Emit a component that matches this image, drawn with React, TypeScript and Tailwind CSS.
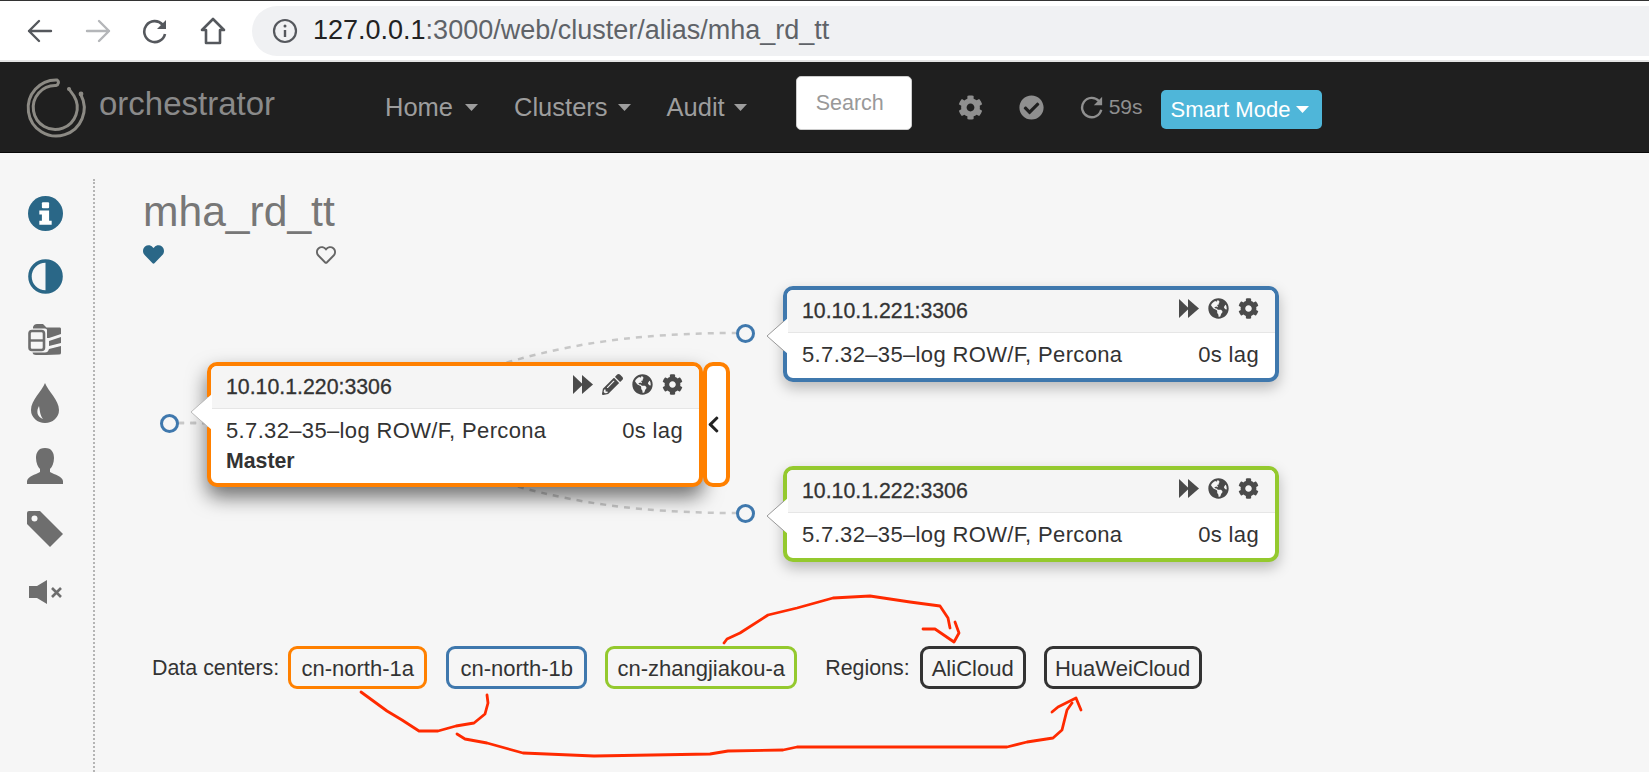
import React from 'react';
import { FaCog, FaCheckCircle, FaGlobeAmericas, FaPencilAlt, FaChevronLeft, FaHeart, FaRegHeart } from 'react-icons/fa';

const Caret = ({ className }: { className: string }) => (
  <svg width="13" height="7" viewBox="0 0 13 7" className={className}>
    <polygon points="0,0 13,0 6.5,7" fill="currentColor" />
  </svg>
);

const Logo = () => (
  <svg width="80" height="75" viewBox="0 0 80 75" fill="none" stroke="#8c8a84" strokeLinecap="round">
    <path d="M60 25 A28 28 0 1 1 36 10 A3 3 0 0 1 35 15.5 A22 22 0 1 0 53 26 L48 19" strokeWidth="3" />
    <circle cx="48" cy="19" r="2" fill="#8c8a84" stroke="none" />
    <circle cx="60" cy="24" r="2.4" fill="#8c8a84" stroke="none" />
  </svg>
);

const BackArrow = ({ className }: { className: string }) => (
  <svg width="26" height="26" viewBox="0 0 26 26" fill="none" stroke="currentColor" strokeWidth="2.4" strokeLinecap="round" strokeLinejoin="round" className={className}>
    <path d="M24 13 H2 M12 3 L2 13 L12 23" />
  </svg>
);

const ForwardArrow = ({ className }: { className: string }) => (
  <svg width="26" height="26" viewBox="0 0 26 26" fill="none" stroke="currentColor" strokeWidth="2.4" strokeLinecap="round" strokeLinejoin="round" className={className}>
    <path d="M2 13 H24 M14 3 L24 13 L14 23" />
  </svg>
);

const ReloadIcon = ({ size, className }: { size: number; className: string }) => (
  <svg width={size} height={size} viewBox="0 0 26 26" className={className}>
    <path d="M20.5 6.5 A10.5 10.5 0 1 0 23 16" fill="none" stroke="currentColor" strokeWidth="2.6" />
    <polygon points="24,2 24,11 15,11" fill="currentColor" />
  </svg>
);

const HomeIcon = () => (
  <svg width="26" height="28" viewBox="0 0 26 28" fill="none" stroke="#55585d" strokeWidth="2.6" strokeLinejoin="round">
    <path d="M13 2 L24 13 H20 V26 H6 V13 H2 Z" />
  </svg>
);

const InfoOutline = () => (
  <svg width="26" height="26" viewBox="0 0 26 26" fill="none" stroke="#55585d">
    <circle cx="13" cy="13" r="11" strokeWidth="2.2" />
    <path d="M13 12 V19" strokeWidth="2.4" />
    <circle cx="13" cy="8" r="1.5" fill="#55585d" stroke="none" />
  </svg>
);

const ForwardIcon = () => (
  <svg width="20" height="19" viewBox="0 0 20 19" fill="#4a4a4a">
    <polygon points="0,0 10,9.5 0,19" />
    <polygon points="9,0 20,9.5 9,19" />
  </svg>
);

const InfoIcon = () => (
  <svg width="35" height="35" viewBox="0 0 34 34">
    <circle cx="17" cy="17" r="17" fill="#2a6787" />
    <rect x="13.5" y="6" width="7" height="6" rx="1" fill="#fff" />
    <polygon points="11,14 20.5,14 20.5,24 23,24 23,28 11,28 11,24 13.5,24 13.5,18 11,18" fill="#fff" />
  </svg>
);

const AdjustIcon = () => (
  <svg width="35" height="35" viewBox="0 0 36 36">
    <circle cx="18" cy="18" r="16" fill="none" stroke="#2a6787" strokeWidth="3.6" />
    <path d="M18 1 A17 17 0 0 1 18 35 Z" fill="#2a6787" />
  </svg>
);

const BlocksIcon = () => (
  <svg width="36" height="36" viewBox="8 8 36 36" fill="#6e6e6e">
    <rect x="10.5" y="17" width="14.5" height="19" rx="2.5" fill="none" stroke="#6e6e6e" strokeWidth="2.6" />
    <path d="M10.5 26.5 H25" fill="none" stroke="#6e6e6e" strokeWidth="2.4" />
    <path d="M14 13 Q15 10 18 10 H24 L27.5 13.5 H41 Q42 13.5 42 15 V20 L30 24 H28 V16 Q28 14.5 26 14.5 H14 Z" />
    <path d="M30 27 L42 23 V29 L30 32 Z" />
    <path d="M30 35 L42 32 V39 Q42 40.5 40 40.5 L27 41 H17 Q14 41 13.5 38.5 H26 Q29 38.5 30 35 Z" />
  </svg>
);

const DropIcon = () => (
  <svg width="28" height="40" viewBox="0 0 28 40">
    <path d="M14 0 C17 8 28 17 28 27 A14 13 0 0 1 0 27 C0 17 11 8 14 0 Z" fill="#6e6e6e" />
    <path d="M8 23 C5 28 6 34 12 36 C9 32 9 28 8 23 Z" fill="#f6f6f6" />
  </svg>
);

const UserIcon = () => (
  <svg width="36" height="36" viewBox="0 0 36 36" fill="#6e6e6e">
    <path d="M18 0 C11 0 9 5 9 10 C9 15 11 19 13 21 V24 C8 27 1 28 0 33 V36 H36 V33 C35 28 28 27 23 24 V21 C25 19 27 15 27 10 C27 5 25 0 18 0 Z" />
  </svg>
);

const TagIcon = () => (
  <svg width="36" height="36" viewBox="0 0 36 36">
    <path d="M0 2 A2 2 0 0 1 2 0 H13 L36 23 L23 36 L0 13 Z" fill="#6e6e6e" />
    <circle cx="7.5" cy="7.5" r="3" fill="#f6f6f6" />
  </svg>
);

const MuteIcon = () => (
  <svg width="33" height="24" viewBox="0 0 33 24">
    <polygon points="0,6 8,6 18,0 18,24 8,18 0,18" fill="#6e6e6e" />
    <path d="M23 8 L32 17 M32 8 L23 17" stroke="#6e6e6e" strokeWidth="2.6" />
  </svg>
);

const Notch = ({ stroke, className }: { stroke: string; className: string }) => (
  <svg width="22" height="36" viewBox="0 0 22 36" className={className}>
    <polygon points="22,0 1,18 22,36" fill="#ffffff" />
    <polyline points="18,3 1,18 18,33" fill="none" stroke={stroke} strokeWidth="1" />
  </svg>
);

const NodeCircle = ({ className }: { className: string }) => (
  <div className={`absolute w-[19px] h-[19px] rounded-full border-[3px] border-[#3f78ad] bg-[#f6f6f6] ${className}`} />
);

const NodeIcons = ({ edit }: { edit?: boolean }) => (
  <div className="flex items-center gap-[9px] text-[#4a4a4a] mt-[-5px]">
    <ForwardIcon />
    {edit && <FaPencilAlt size={21} />}
    <FaGlobeAmericas size={21} />
    <FaCog size={21} />
  </div>
);

const NodeHeader = ({ host, edit }: { host: string; edit?: boolean }) => (
  <div className="h-[43px] shrink-0 bg-[#f5f5f5] border-b border-[#e6e6e6] rounded-t-[6px] pl-[15px] pr-[16px] flex items-center justify-between">
    <span className="text-[21.3px] text-[#333] mt-[2px] [-webkit-text-stroke:0.3px_#333]">{host}</span>
    <NodeIcons edit={edit} />
  </div>
);

const NodeBody = () => (
  <div className="flex items-center justify-between text-[22px] tracking-[0.35px] text-[#333] pl-[15px] pr-[16px] h-[43px]">
    <span>5.7.32–35–log ROW/F, Percona</span>
    <span>0s lag</span>
  </div>
);

const Tag = ({ label, className }: { label: string; className: string }) => (
  <div className={`h-[43px] border-[3px] rounded-[9px] flex items-center justify-center pt-[2px] text-[22px] text-[#333] ${className}`}>
    {label}
  </div>
);

export default function App() {
  return (
    <div className="relative w-full h-[772px] overflow-hidden bg-[#f6f6f6] font-['Liberation_Sans',Arial,sans-serif]">
      {/* browser chrome */}
      <div className="h-[62px] bg-white border-t border-[#333] border-b-2 border-b-[#e4e4e4] flex items-center pl-[27px]">
        <BackArrow className="text-[#55585d]" />
        <ForwardArrow className="ml-[32px] text-[#b4b6b9]" />
        <ReloadIcon size={26} className="ml-[31px] text-[#55585d]" />
        <div className="ml-[32px]"><HomeIcon /></div>
        <div className="ml-[26px] flex-1 h-[50px] rounded-l-full bg-[#f0f1f3] flex items-center pl-[20px]">
          <InfoOutline />
          <span className="ml-[15px] text-[27px] text-[#5f6368]">
            <span className="text-[#222]">127.0.0.1</span>:3000/web/cluster/alias/mha_rd_tt
          </span>
        </div>
      </div>

      {/* navbar */}
      <div className="h-[91px] bg-[#1f1f1f] border-b border-[#080808] flex items-center">
        <div className="ml-[21px] w-[78px]"><Logo /></div>
        <span className="w-[176px] text-[33px] text-[#8a8a8a] mt-[-6px]">orchestrator</span>
        <div className="ml-[110px] flex items-center text-[25.5px] text-[#9d9d9d]">
          <span>Home</span>
          <Caret className="ml-[12px]" />
          <span className="ml-[36px]">Clusters</span>
          <Caret className="ml-[10px]" />
          <span className="ml-[36px]">Audit</span>
          <Caret className="ml-[9px]" />
        </div>
        <div className="ml-[49px] w-[116px] h-[54px] mt-[-8px] bg-white rounded-[5px] border border-[#ccc] flex items-center pl-[19px] text-[21.5px] text-[#999]">
          Search
        </div>
        <FaCog size={25} className="ml-[46px] text-[#8f8f8f]" />
        <FaCheckCircle size={25} className="ml-[36px] text-[#8f8f8f]" />
        <ReloadIcon size={24} className="ml-[36px] text-[#8f8f8f]" />
        <span className="ml-[5px] text-[21px] text-[#8f8f8f]">59s</span>
        <div className="ml-[18px] mt-[5px] w-[161px] h-[39px] bg-[#4fb6d9] rounded-[5px] flex items-center pl-[10px] text-[22px] text-white">
          Smart Mode
          <Caret className="ml-[6px]" />
        </div>
      </div>

      {/* page */}
      <div className="flex">
        <div className="w-[95px] mt-[26px] pt-[3px] pr-[3px] h-[600px] border-r-2 border-dotted border-[#b5b5b5] flex flex-col items-center">
          {[
            <InfoIcon />,
            <AdjustIcon />,
            <BlocksIcon />,
            <DropIcon />,
            <UserIcon />,
            <TagIcon />,
            <MuteIcon />,
          ].map((icon, i) => (
            <div key={i} className="h-[63px] flex items-center justify-center">
              {icon}
            </div>
          ))}
        </div>

        <div className="flex-1">
          <div className="h-[117px] pl-[48px] pt-[33px]">
            <h1 className="text-[42.6px] leading-[50px] text-[#777]">mha_rd_tt</h1>
            <div className="w-[193px] flex items-center justify-between mt-[8px]">
              <FaHeart size={21} className="text-[#2a6787]" />
              <FaRegHeart size={20} className="text-[#666]" />
            </div>
          </div>

          {/* topology canvas */}
          <div className="relative h-[376px]">
            <svg width="1554" height="376" className="absolute left-0 top-0" fill="none" stroke="#c8c8c8" strokeWidth="2.5" strokeDasharray="6 6">
              <path d="M83 153 C362 153 362 63 641 63" />
              <path d="M83 153 C362 153 362 243 641 243" />
            </svg>

            <NodeCircle className="left-[65px] top-[144px]" />
            <NodeCircle className="left-[641px] top-[54px]" />
            <NodeCircle className="left-[641px] top-[234px]" />

            <div className="absolute left-[688px] top-[16px] w-[496px] h-[96px] bg-white border-4 border-[#3f78ad] rounded-[10px] shadow-[0_6px_14px_rgba(0,0,0,0.25)]">
              <NodeHeader host="10.10.1.221:3306" />
              <NodeBody />
              <Notch stroke="#999" className="absolute left-[-21px] top-[28px]" />
            </div>

            <div className="absolute left-[688px] top-[196px] w-[496px] h-[96px] bg-white border-4 border-[#94c92e] rounded-[10px] shadow-[0_6px_14px_rgba(0,0,0,0.25)]">
              <NodeHeader host="10.10.1.222:3306" />
              <NodeBody />
              <Notch stroke="#999" className="absolute left-[-21px] top-[28px]" />
            </div>

            <div className="absolute left-[112px] top-[92px] w-[496px] h-[125px] bg-white border-4 border-[#ff8000] rounded-[10px] shadow-[0_10px_20px_rgba(0,0,0,0.55)]">
              <NodeHeader host="10.10.1.220:3306" edit />
              <NodeBody />
              <div className="pl-[15px] mt-[-2px] text-[21.3px] leading-[22px] font-bold text-[#333]">Master</div>
              <Notch stroke="#bbb" className="absolute left-[-21px] top-[28px]" />
            </div>
            <div className="absolute left-[608px] top-[92px] w-[27px] h-[125px] bg-white border-4 border-[#ff8000] rounded-[10px] flex items-center text-[#222]">
              <FaChevronLeft size={19} className="ml-[-3px] shrink-0" />
            </div>
          </div>

          <div className="flex items-center pl-[57px] text-[21.4px] text-[#333]">
            <span className="pt-[2px]">Data centers:</span>
            <Tag label="cn-north-1a" className="ml-[9px] w-[139px] border-[#ff8000]" />
            <Tag label="cn-north-1b" className="ml-[19px] w-[141px] border-[#3f78ad]" />
            <Tag label="cn-zhangjiakou-a" className="ml-[18px] w-[192px] border-[#94c92e]" />
            <span className="ml-[28px] pt-[2px]">Regions:</span>
            <Tag label="AliCloud" className="ml-[10px] w-[106px] border-[#333]" />
            <Tag label="HuaWeiCloud" className="ml-[18px] w-[158px] border-[#333]" />
          </div>
        </div>
      </div>

      {/* hand drawn annotations */}
      <svg width="1649" height="772" className="absolute left-0 top-0 pointer-events-none" fill="none" stroke="#ff2a00" strokeWidth="2.8" strokeLinecap="round" strokeLinejoin="round">
        <polyline points="361,692 387,711 402,720 419,731 438,731 456,726 474,723 485,714 488,703 487,695" />
        <polyline points="457,734 465,739 487,743 523,753 594,756 710,754 728,751 783,750 797,747 933,747 1007,747 1027,742 1053,738 1062,730 1067,710 1072,703" />
        <polyline points="1052,712 1058,707 1072,700 1076,698 1081,710" />
        <polyline points="724,643 727,639 740,633 768,615 797,608 833,598 870,596 910,602 940,606 948,618 950,628" />
        <polyline points="923,629 935,629 954,642 959,633 955,622" />
      </svg>
    </div>
  );
}
